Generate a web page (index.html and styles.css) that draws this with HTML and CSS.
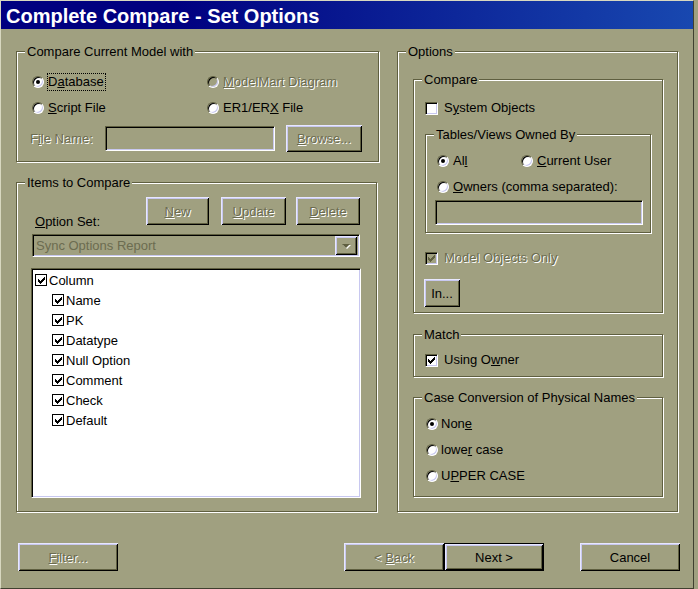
FILE: index.html
```html
<!DOCTYPE html>
<html>
<head>
<meta charset="utf-8">
<title>Complete Compare - Set Options</title>
<link rel="stylesheet" href="styles.css">
</head>
<body>
<div class="window">
  <div class="titlebar">Complete Compare - Set Options</div>
  <div class="client">
    <div class="columns">
      <div class="col-left">
        <div class="frame f-model">
          <div class="legend">Compare Current Model with</div>
          <div class="radio-grid">
            <div class="opt"><span class="radio on"></span><span class="txt focus">D<u>a</u>tabase</span></div>
            <div class="opt dis"><span class="radio off"></span><span class="txt"><u>M</u>odelMart Diagram</span></div>
            <div class="opt"><span class="radio"></span><span class="txt"><u>S</u>cript File</span></div>
            <div class="opt"><span class="radio"></span><span class="txt">ER1/ER<u>X</u> File</span></div>
          </div>
          <div class="file-row">
            <span class="file-label dis">F<u>i</u>le Name:</span>
            <span class="sunken file-input"></span>
            <span class="btn dis-btn browse"><span><u>B</u>rowse...</span></span>
          </div>
        </div>
        <div class="frame f-items">
          <div class="legend">Items to Compare</div>
          <div class="set-row">
            <span class="set-label"><u>O</u>ption Set:</span>
            <span class="btn dis-btn b-new"><span><u>N</u>ew</span></span>
            <span class="btn dis-btn b-update"><span><u>U</u>pdate</span></span>
            <span class="btn dis-btn b-delete"><span><u>D</u>elete</span></span>
          </div>
          <div class="sunken combo">
            <span class="combo-text">Sync Options Report</span>
            <span class="combo-btn"><span class="arrow"></span></span>
          </div>
          <div class="sunken tree">
            <div class="titem"><span class="tcb"><svg viewBox="0 0 7 7"><path d="M6 0h1v1h-1z M5 1h2v1h-2z M0 2h1v1h-1z M4 2h3v1h-3z M0 3h2v1h-2z M3 3h3v1h-3z M0 4h5v1h-5z M1 5h3v1h-3z M2 6h1v1h-1z"/></svg></span>Column</div>
            <div class="titem child"><span class="tcb"><svg viewBox="0 0 7 7"><path d="M6 0h1v1h-1z M5 1h2v1h-2z M0 2h1v1h-1z M4 2h3v1h-3z M0 3h2v1h-2z M3 3h3v1h-3z M0 4h5v1h-5z M1 5h3v1h-3z M2 6h1v1h-1z"/></svg></span>Name</div>
            <div class="titem child"><span class="tcb"><svg viewBox="0 0 7 7"><path d="M6 0h1v1h-1z M5 1h2v1h-2z M0 2h1v1h-1z M4 2h3v1h-3z M0 3h2v1h-2z M3 3h3v1h-3z M0 4h5v1h-5z M1 5h3v1h-3z M2 6h1v1h-1z"/></svg></span>PK</div>
            <div class="titem child"><span class="tcb"><svg viewBox="0 0 7 7"><path d="M6 0h1v1h-1z M5 1h2v1h-2z M0 2h1v1h-1z M4 2h3v1h-3z M0 3h2v1h-2z M3 3h3v1h-3z M0 4h5v1h-5z M1 5h3v1h-3z M2 6h1v1h-1z"/></svg></span>Datatype</div>
            <div class="titem child"><span class="tcb"><svg viewBox="0 0 7 7"><path d="M6 0h1v1h-1z M5 1h2v1h-2z M0 2h1v1h-1z M4 2h3v1h-3z M0 3h2v1h-2z M3 3h3v1h-3z M0 4h5v1h-5z M1 5h3v1h-3z M2 6h1v1h-1z"/></svg></span>Null Option</div>
            <div class="titem child"><span class="tcb"><svg viewBox="0 0 7 7"><path d="M6 0h1v1h-1z M5 1h2v1h-2z M0 2h1v1h-1z M4 2h3v1h-3z M0 3h2v1h-2z M3 3h3v1h-3z M0 4h5v1h-5z M1 5h3v1h-3z M2 6h1v1h-1z"/></svg></span>Comment</div>
            <div class="titem child"><span class="tcb"><svg viewBox="0 0 7 7"><path d="M6 0h1v1h-1z M5 1h2v1h-2z M0 2h1v1h-1z M4 2h3v1h-3z M0 3h2v1h-2z M3 3h3v1h-3z M0 4h5v1h-5z M1 5h3v1h-3z M2 6h1v1h-1z"/></svg></span>Check</div>
            <div class="titem child"><span class="tcb"><svg viewBox="0 0 7 7"><path d="M6 0h1v1h-1z M5 1h2v1h-2z M0 2h1v1h-1z M4 2h3v1h-3z M0 3h2v1h-2z M3 3h3v1h-3z M0 4h5v1h-5z M1 5h3v1h-3z M2 6h1v1h-1z"/></svg></span>Default</div>
          </div>
        </div>
      </div>
      <div class="col-right">
        <div class="frame f-options">
          <div class="legend">Options</div>
          <div class="frame f-compare">
            <div class="legend">Compare</div>
            <div class="opt sys"><span class="chk"></span><span class="txt">S<u>y</u>stem Objects</span></div>
            <div class="frame f-tables">
              <div class="legend">Tables/Views Owned By</div>
              <div class="owner-grid">
                <div class="opt"><span class="radio on"></span><span class="txt">Al<u>l</u></span></div>
                <div class="opt"><span class="radio"></span><span class="txt"><u>C</u>urrent User</span></div>
              </div>
              <div class="opt owners"><span class="radio"></span><span class="txt"><u>O</u>wners (comma separated):</span></div>
              <span class="sunken owner-input"></span>
            </div>
            <div class="opt dis model-only"><span class="chk off"><svg viewBox="0 0 7 7"><path d="M6 0h1v1h-1z M5 1h2v1h-2z M0 2h1v1h-1z M4 2h3v1h-3z M0 3h2v1h-2z M3 3h3v1h-3z M0 4h5v1h-5z M1 5h3v1h-3z M2 6h1v1h-1z"/></svg></span><span class="txt">Model Objects Only</span></div>
            <span class="btn b-in"><span>In...</span></span>
          </div>
          <div class="frame f-match">
            <div class="legend">Match</div>
            <div class="opt match-row"><span class="chk"><svg viewBox="0 0 7 7"><path d="M6 0h1v1h-1z M5 1h2v1h-2z M0 2h1v1h-1z M4 2h3v1h-3z M0 3h2v1h-2z M3 3h3v1h-3z M0 4h5v1h-5z M1 5h3v1h-3z M2 6h1v1h-1z"/></svg></span><span class="txt">Using O<u>w</u>ner</span></div>
          </div>
          <div class="frame f-case">
            <div class="legend">Case Conversion of Physical Names</div>
            <div class="case-list">
              <div class="opt"><span class="radio on"></span><span class="txt">Non<u>e</u></span></div>
              <div class="opt"><span class="radio"></span><span class="txt">lowe<u>r</u> case</span></div>
              <div class="opt"><span class="radio"></span><span class="txt">U<u>P</u>PER CASE</span></div>
            </div>
          </div>
        </div>
      </div>
    </div>
    <div class="footer">
      <span class="btn dis-btn b-filter"><span><u>F</u>ilter...</span></span>
      <span class="btn dis-btn b-back"><span>&lt; <u>B</u>ack</span></span>
      <span class="btn default b-next"><span>Next &gt;</span></span>
      <span class="btn b-cancel"><span>Cancel</span></span>
    </div>
  </div>
</div>
</body>
</html>
```
FILE: styles.css
```css
* { box-sizing: border-box; }
html, body { margin: 0; padding: 0; }
body {
  width: 698px;
  height: 589px;
  overflow: hidden;
  background: #a0a080;
  font-family: "Liberation Sans", Arial, sans-serif;
  font-size: 13px;
  color: #000;
}
u { text-decoration: underline; text-underline-offset: 1px; }

.window {
  width: 694px;
  height: 589px;
  background: #a0a080;
  border-top: 1px solid #d8d8c0;
  border-left: 1px solid #d8d8c0;
  border-right: 1px solid #404030;
  border-bottom: 1px solid #404030;
  display: flex;
  flex-direction: column;
}
.titlebar {
  height: 28px;
  line-height: 30px;
  overflow: hidden;
  padding-left: 5px;
  color: #fff;
  font-weight: bold;
  font-size: 20px;
  white-space: nowrap;
  background: linear-gradient(to right, #000080 0%, #000080 25%, #1848b0 100%);
}
.client {
  flex: 1;
  padding: 22px 0 0 15px;
  display: flex;
  flex-direction: column;
}
.columns { display: flex; gap: 18px; align-items: flex-start; }
.col-left { display: flex; flex-direction: column; width: 363px; }
.col-right { display: flex; flex-direction: column; width: 281px; }

/* etched group frame */
.frame {
  border: 1px solid #5f5f40;
  box-shadow: 1px 1px 0 #fff, inset 1px 1px 0 #fff;
  display: flex;
  flex-direction: column;
  align-items: flex-start;
}
.legend {
  margin: -8px 0 0 8px;
  padding: 0 2px;
  line-height: 16px;
  background: #a0a080;
  white-space: nowrap;
}

/* options */
.opt { display: flex; align-items: center; gap: 3px; line-height: 16px; white-space: nowrap; }
.opt .txt { border: 1px dotted transparent; padding: 0 1px 0 0; }
.opt .txt.focus { border-color: #000; }
.dis, .dis-btn > span {
  color: #6c6c50;
  text-shadow: 1px 1px 0 #fff;
}

.radio {
  width: 12px;
  height: 12px;
  border-radius: 50%;
  background: #fff;
  border: 1px solid;
  border-color: #5f5f40 #fff #fff #5f5f40;
  box-shadow: inset 1px 1px 0 #000, inset -1px -1px 0 #c8c8f0;
  display: grid;
  place-items: center;
  flex: none;
}
.radio.off { background: #a0a080; }
.radio.on::after {
  content: "";
  width: 4px;
  height: 4px;
  border-radius: 50%;
  background: #000;
}

.chk {
  width: 13px;
  height: 13px;
  background: #fff;
  border: 1px solid;
  border-color: #5f5f40 #fff #fff #5f5f40;
  box-shadow: inset 1px 1px 0 #000, inset -1px -1px 0 #c8c8f0;
  display: grid;
  place-items: center;
  flex: none;
}
svg { shape-rendering: crispEdges; }
.chk svg { width: 7px; height: 7px; fill: #000; }
.chk.off { background: #a0a080; }
.chk.off svg { fill: #5f5f40; }

.sunken {
  display: block;
  border: 1px solid;
  border-color: #5f5f40 #fff #fff #5f5f40;
  box-shadow: inset 1px 1px 0 #000, inset -1px -1px 0 #c8c8f0;
  background: #a0a080;
}

.btn {
  display: flex;
  align-items: center;
  justify-content: center;
  height: 28px;
  background: #a0a080;
  box-shadow: inset 1px 1px 0 #e8e8ff, inset -1px -1px 0 #000, inset 2px 2px 0 #c8c8f0, inset -2px -2px 0 #5f5f40;
  white-space: nowrap;
  flex: none;
}
.btn.default {
  border: 1px solid #000;
}

/* model frame */
.f-model { height: 111px; width: 363px; }
.radio-grid {
  margin: 13px 0 0 15px;
  display: grid;
  grid-template-columns: 175px auto;
  row-gap: 8px;
}
.radio-grid .opt { height: 18px; }
.file-row { margin-top: 8px; display: flex; align-items: center; }
.file-label { width: 88px; padding-left: 13px; line-height: 16px; }
.file-input { width: 170px; height: 25px; margin-right: 11px; }
.browse { width: 76px; height: 27px; }

/* items frame */
.f-items { margin-top: 20px; height: 330px; width: 361px; }
.set-row {
  margin-top: 6px;
  align-self: stretch;
  display: flex;
  align-items: flex-end;
  padding: 0 16px 0 18px;
}
.set-label { margin-right: auto; margin-bottom: -5px; line-height: 16px; }
.b-new { width: 63px; }
.b-update { width: 65px; margin-left: 12px; }
.b-delete { width: 64px; margin-left: 10px; }
.combo {
  margin: 9px 0 0 15px;
  width: 328px;
  height: 23px;
  display: flex;
  align-items: center;
  justify-content: space-between;
  padding: 0 2px 0 2px;
}
.combo-text { color: #6c6c50; padding-left: 1px; }
.combo-btn {
  width: 22px;
  height: 19px;
  background: #a0a080;
  box-shadow: inset 1px 1px 0 #e8e8ff, inset -1px -1px 0 #000, inset 2px 2px 0 #c8c8f0, inset -2px -2px 0 #5f5f40;
  display: grid;
  place-items: center;
}
.arrow {
  width: 0;
  height: 0;
  border-left: 4px solid transparent;
  border-right: 4px solid transparent;
  border-top: 4px solid #5f5f40;
  filter: drop-shadow(1px 1px 0 #fff);
}
.tree {
  margin: 11px 0 0 14px;
  width: 330px;
  height: 230px;
  background: #fff;
  padding: 1px 0 0 3px;
}
.titem { display: flex; align-items: center; height: 20px; gap: 2px; white-space: nowrap; }
.titem.child { padding-left: 17px; }
.tcb {
  width: 12px;
  height: 12px;
  border: 1px solid #000;
  background: #fff;
  display: grid;
  place-items: center;
  flex: none;
}
.tcb svg { width: 7px; height: 7px; fill: #000; }

/* right side */
.f-options { width: 281px; height: 461px; }
.f-compare { margin: 19px 0 0 15px; width: 250px; height: 234px; }
.sys { margin: 12px 0 0 11px; height: 16px; }
.sys .txt, .model-only .txt, .match-row .txt { margin-left: 2px; }
.f-tables { margin: 18px 0 0 11px; width: 226px; height: 99px; }
.owner-grid {
  margin: 9px 0 0 11px;
  display: grid;
  grid-template-columns: 84px auto;
}
.owners { margin: 8px 0 0 11px; }
.owner-input { margin: 4px 0 0 9px; width: 208px; height: 25px; }
.model-only { margin: 17px 0 0 11px; height: 16px; }
.b-in { margin: 13px 0 0 10px; width: 36px; }
.f-match { margin: 21px 0 0 15px; width: 250px; height: 43px; }
.match-row { margin: 9px 0 0 11px; height: 16px; }
.f-case { margin: 20px 0 0 15px; width: 250px; height: 100px; }
.case-list { margin: 10px 0 0 12px; display: flex; flex-direction: column; gap: 10px; }
.case-list .opt { height: 16px; gap: 2px; }

/* footer */
.footer { margin-top: 31px; display: flex; padding-left: 2px; }
.footer .btn { width: 100px; height: 28px; }
.b-back { margin-left: 226px; }
.b-cancel { margin-left: 36px; }
```
